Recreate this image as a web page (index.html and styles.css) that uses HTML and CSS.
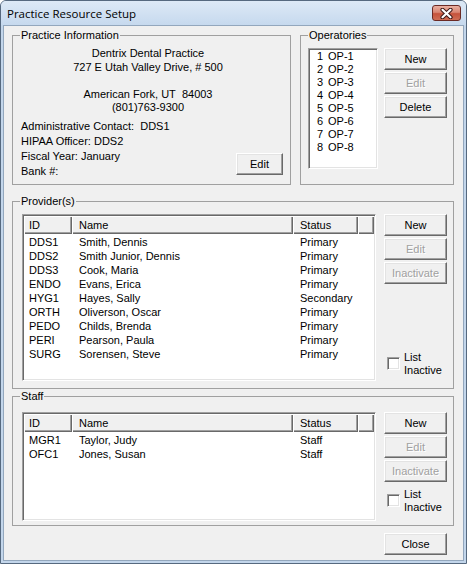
FILE: index.html
```html
<!DOCTYPE html>
<html lang="en">
<head>
    <meta charset="UTF-8">
    <title>Practice Resource Setup</title>
    <link rel="stylesheet" href="styles.css">
</head>
<body>
    <div class="window">
        <header class="titlebar">
            <span class="title">Practice Resource Setup</span>
            <button class="close-btn" aria-label="Close">
                <svg width="13" height="11" viewBox="0 0 13 11">
                    <path d="M2.5 1.8 L10.5 9.2 M10.5 1.8 L2.5 9.2" stroke="#3e1a1a" stroke-width="4.2" stroke-linecap="round"/>
                    <path d="M2.5 1.8 L10.5 9.2 M10.5 1.8 L2.5 9.2" stroke="#fff" stroke-width="2.2" stroke-linecap="round"/>
                </svg>
            </button>
        </header>

        <main class="client">
            <div class="top-row">
                <fieldset class="group practice">
                    <legend>Practice Information</legend>
                    <div class="group-body">
                        <div class="address">
                            <div>Dentrix Dental Practice</div>
                            <div>727 E Utah Valley Drive, # 500</div>
                            <div>&nbsp;</div>
                            <div>American Fork, UT&nbsp; 84003</div>
                            <div>(801)763-9300</div>
                        </div>
                        <div class="info">
                            <div class="info-lines">
                                <div>Administrative Contact:&nbsp; DDS1</div>
                                <div>HIPAA Officer: DDS2</div>
                                <div>Fiscal Year: January</div>
                                <div>Bank #:</div>
                            </div>
                            <button class="btn btn-small">Edit</button>
                        </div>
                    </div>
                </fieldset>

                <fieldset class="group operatories">
                    <legend>Operatories</legend>
                    <div class="group-body">
                        <ul class="listbox">
                            <li><span class="op-num">1</span>OP-1</li>
                            <li><span class="op-num">2</span>OP-2</li>
                            <li><span class="op-num">3</span>OP-3</li>
                            <li><span class="op-num">4</span>OP-4</li>
                            <li><span class="op-num">5</span>OP-5</li>
                            <li><span class="op-num">6</span>OP-6</li>
                            <li><span class="op-num">7</span>OP-7</li>
                            <li><span class="op-num">8</span>OP-8</li>
                        </ul>
                        <div class="btn-col">
                            <button class="btn">New</button>
                            <button class="btn" disabled>Edit</button>
                            <button class="btn">Delete</button>
                        </div>
                    </div>
                </fieldset>
            </div>

            <fieldset class="group providers">
                <legend>Provider(s)</legend>
                <div class="group-body">
                    <div class="listview">
                        <div class="lv-header">
                            <span class="col-id">ID</span>
                            <span class="col-name">Name</span>
                            <span class="col-status">Status</span>
                            <span></span>
                        </div>
                        <div class="lv-rows">
                            <div class="lv-row"><span class="col-id">DDS1</span><span class="col-name">Smith, Dennis</span><span class="col-status">Primary</span></div>
                            <div class="lv-row"><span class="col-id">DDS2</span><span class="col-name">Smith Junior, Dennis</span><span class="col-status">Primary</span></div>
                            <div class="lv-row"><span class="col-id">DDS3</span><span class="col-name">Cook, Maria</span><span class="col-status">Primary</span></div>
                            <div class="lv-row"><span class="col-id">ENDO</span><span class="col-name">Evans, Erica</span><span class="col-status">Primary</span></div>
                            <div class="lv-row"><span class="col-id">HYG1</span><span class="col-name">Hayes, Sally</span><span class="col-status">Secondary</span></div>
                            <div class="lv-row"><span class="col-id">ORTH</span><span class="col-name">Oliverson, Oscar</span><span class="col-status">Primary</span></div>
                            <div class="lv-row"><span class="col-id">PEDO</span><span class="col-name">Childs, Brenda</span><span class="col-status">Primary</span></div>
                            <div class="lv-row"><span class="col-id">PERI</span><span class="col-name">Pearson, Paula</span><span class="col-status">Primary</span></div>
                            <div class="lv-row"><span class="col-id">SURG</span><span class="col-name">Sorensen, Steve</span><span class="col-status">Primary</span></div>
                        </div>
                    </div>
                    <div class="btn-col">
                        <button class="btn">New</button>
                        <button class="btn" disabled>Edit</button>
                        <button class="btn" disabled>Inactivate</button>
                        <label class="check check-bottom">
                            <span class="checkbox"></span>
                            <span>List<br>Inactive</span>
                        </label>
                    </div>
                </div>
            </fieldset>

            <fieldset class="group staff">
                <legend>Staff</legend>
                <div class="group-body">
                    <div class="listview staff-list">
                        <div class="lv-header">
                            <span class="col-id">ID</span>
                            <span class="col-name">Name</span>
                            <span class="col-status">Status</span>
                            <span></span>
                        </div>
                        <div class="lv-rows">
                            <div class="lv-row"><span class="col-id">MGR1</span><span class="col-name">Taylor, Judy</span><span class="col-status">Staff</span></div>
                            <div class="lv-row"><span class="col-id">OFC1</span><span class="col-name">Jones, Susan</span><span class="col-status">Staff</span></div>
                        </div>
                    </div>
                    <div class="btn-col">
                        <button class="btn">New</button>
                        <button class="btn" disabled>Edit</button>
                        <button class="btn" disabled>Inactivate</button>
                        <label class="check">
                            <span class="checkbox"></span>
                            <span>List<br>Inactive</span>
                        </label>
                    </div>
                </div>
            </fieldset>

            <div class="footer">
                <button class="btn">Close</button>
            </div>
        </main>
    </div>
</body>
</html>
```

FILE: styles.css
```css
html, body {
    margin: 0;
    padding: 0;
    background-color: #fff;
    font-family: "Liberation Sans", Arial, sans-serif;
    font-size: 11px;
    color: #000;
}

/* window frame */
.window {
    width: 467px;
    height: 564px;
    box-sizing: border-box;
    border: 1px solid #56697f;
    border-radius: 6px 6px 0 0;
    background-color: #c3d6eb;
    display: flex;
    flex-direction: column;
    overflow: hidden;
}

.titlebar {
    height: 24px;
    flex: none;
    display: flex;
    align-items: center;
    justify-content: space-between;
    padding: 0 5px 0 6px;
    background: linear-gradient(#dde9f6, #c6d9ee);
}

.title {
    font-family: "Open Sans", "Noto Sans", sans-serif;
    font-size: 11.5px;
    color: #000;
}

.close-btn {
    width: 29px;
    height: 16px;
    padding: 0;
    border: 1px solid #6b2a25;
    border-radius: 3px;
    background: linear-gradient(#eab0a2 0%, #d98572 45%, #c5523b 55%, #cf6d55 100%);
    display: flex;
    align-items: center;
    justify-content: center;
}

.client {
    flex: 1;
    margin: 0 2px 3px;
    border: 1px solid #93a7bd;
    background-color: #f0f0f0;
    padding: 3px 9px 5px 8px;
    display: flex;
    flex-direction: column;
}

/* group boxes */
.group {
    margin: 0;
    padding: 0;
    min-width: 0;
    border: 1px solid #a0a0a0;
}

.group legend {
    margin-left: 7px;
    padding: 0 1px;
    line-height: 13px;
}

.top-row {
    display: flex;
}

.practice {
    width: 279px;
    box-sizing: border-box;
    margin-right: 9px;
}

.practice .group-body {
    padding: 5px 7px 5px 8px;
}

.address {
    text-align: center;
    line-height: 13.5px;
    margin-right: 8px;
}

.info {
    display: flex;
    justify-content: space-between;
    align-items: flex-end;
    margin-top: 4px;
    line-height: 15px;
}

.operatories {
    flex: 1;
}

.operatories .group-body {
    display: flex;
    align-items: flex-start;
    gap: 6px;
    padding: 6px 6px 0 7px;
}

.providers {
    margin-top: 10px;
}

.providers .group-body,
.staff .group-body {
    display: flex;
    gap: 8px;
    padding: 6px 6px 7px 9px;
}

.staff {
    margin-top: 1px;
}

.staff .group-body {
    padding: 9px 6px 4px 9px;
}

/* sunken boxes */
.listbox,
.listview {
    box-sizing: border-box;
    margin: 0;
    padding: 1px;
    border: 1px solid;
    border-color: #a0a0a0 #fff #fff #a0a0a0;
    box-shadow: inset 1px 1px 0 #696969, inset -1px -1px 0 #e3e3e3;
    background-color: #fff;
}

.listbox {
    width: 70px;
    height: 121px;
    list-style: none;
    line-height: 13px;
}

.listbox li {
    padding-left: 7px;
}

.op-num {
    display: inline-block;
    width: 11px;
}

.listview {
    width: 354px;
    height: 167px;
}

.staff-list {
    height: 109px;
}

.lv-header,
.lv-row {
    display: grid;
    grid-template-columns: 48px 221px 65px 1fr;
}

.lv-header {
    height: 18px;
    line-height: 18px;
}

.lv-header span {
    background-color: #f0f0f0;
    box-shadow: inset 1px 1px 0 #fff, inset -1px -1px 0 #696969, inset -2px -2px 0 #a0a0a0;
}

.lv-rows {
    padding-top: 1px;
}

.lv-row {
    height: 14px;
    line-height: 14px;
    white-space: nowrap;
}

.col-id {
    padding-left: 5px;
}

.col-name,
.col-status {
    padding-left: 7px;
}

/* buttons */
.btn-col {
    display: flex;
    flex-direction: column;
    gap: 2px;
    width: 63px;
    flex: none;
}

.btn {
    width: 63px;
    height: 22px;
    box-sizing: border-box;
    padding: 0;
    font-family: inherit;
    font-size: 11px;
    color: #000;
    background-color: #f0f0f0;
    border: 1px solid;
    border-color: #fff #696969 #696969 #fff;
    box-shadow: inset -1px -1px 0 #a0a0a0, inset 1px 1px 0 #e3e3e3;
}

.btn:disabled {
    color: #a0a0a0;
    text-shadow: 1px 1px 0 #fff;
}

.btn-small {
    width: 47px;
    margin-bottom: 4px;
}

/* check boxes */
.check {
    display: flex;
    align-items: center;
    gap: 4px;
    margin: 4px 0 0 3px;
    line-height: 13px;
}

.check-bottom {
    margin-top: auto;
    margin-bottom: 4px;
}

.checkbox {
    width: 13px;
    height: 13px;
    box-sizing: border-box;
    border: 1px solid;
    border-color: #a0a0a0 #fff #fff #a0a0a0;
    box-shadow: inset 1px 1px 0 #696969, inset -1px -1px 0 #e3e3e3;
    background-color: #fff;
}

.footer {
    display: flex;
    justify-content: flex-end;
    margin-top: 7px;
    padding-right: 7px;
}
```
